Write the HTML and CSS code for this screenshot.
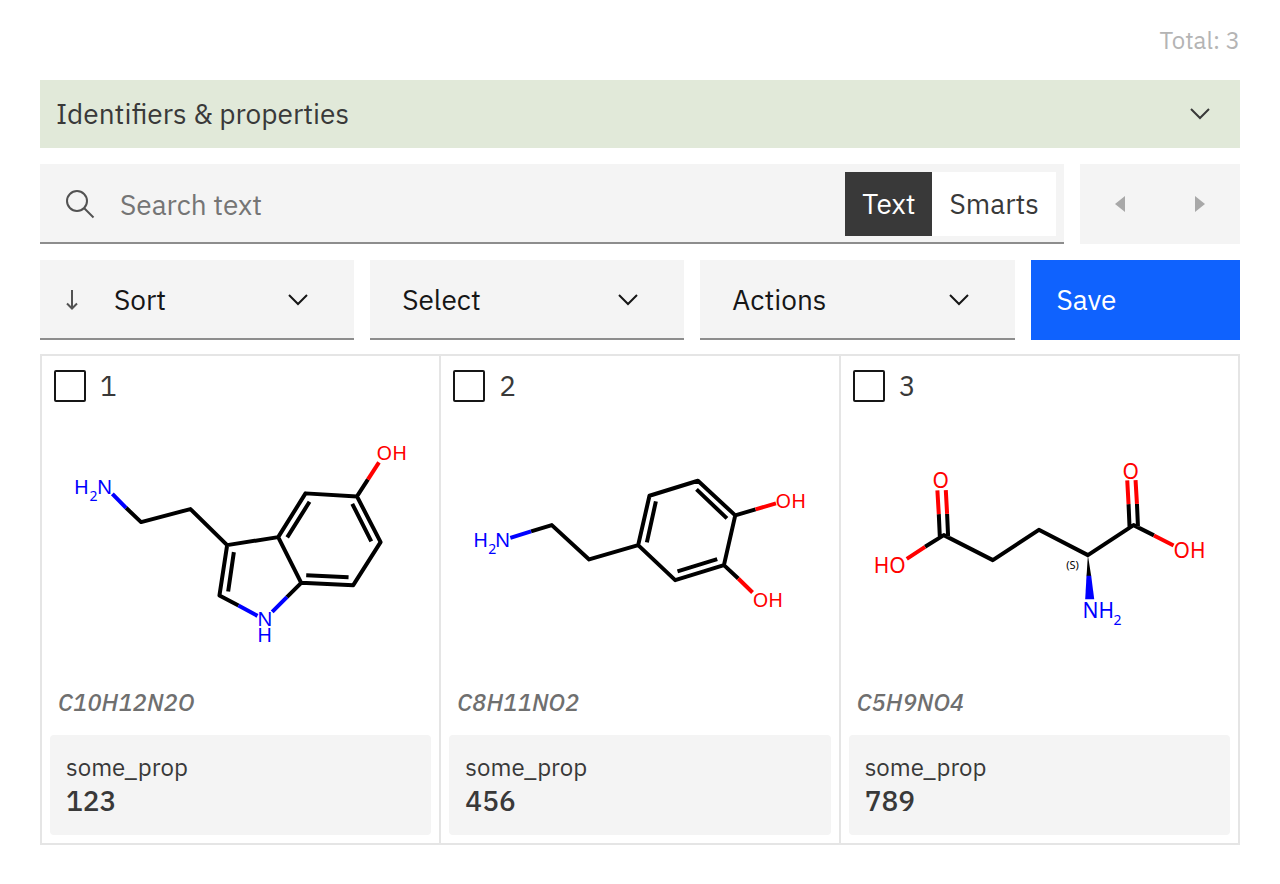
FILE: index.html
```html
<!DOCTYPE html>
<html lang="en">
<head>
<meta charset="utf-8">
<meta name="viewport" content="width=device-width, initial-scale=1">
<title>Molecules</title>
<link rel="stylesheet" href="styles.css">
</head>
<body>
<main class="viewer">
  <p class="total">Total: 3</p>

  <button class="accordion" type="button" aria-expanded="false">
    <span>Identifiers &amp; properties</span>
    <svg class="chevron" viewBox="0 0 20 12" aria-hidden="true"><path d="M1 1l9 9 9-9"/></svg>
  </button>

  <div class="search-row">
    <div class="search">
      <svg class="search-icon" viewBox="0 0 32 32" aria-hidden="true"><circle cx="13" cy="13" r="10"/><path d="M20 20l9.5 9.5"/></svg>
      <input class="search-input" type="text" placeholder="Search text" aria-label="Search text">
      <div class="switch">
        <button class="switch-option switch-option-on" type="button" aria-pressed="true">Text</button>
        <button class="switch-option" type="button" aria-pressed="false">Smarts</button>
      </div>
    </div>
    <div class="pager">
      <button class="page-button" type="button" aria-label="Previous page"><svg class="triangle" viewBox="0 0 10 16" aria-hidden="true"><path d="M10 0v16L0 8z"/></svg></button>
      <button class="page-button" type="button" aria-label="Next page"><svg class="triangle" viewBox="0 0 10 16" aria-hidden="true"><path d="M0 0v16l10-8z"/></svg></button>
    </div>
  </div>

  <div class="action-row">
    <div class="dropdown">
      <button class="direction" type="button" aria-label="Sort direction"><svg class="arrow" viewBox="0 0 14 20" aria-hidden="true"><path d="M7 0v18M2 13.500l5 5 5-5"/></svg></button>
      <select class="select select-sort" aria-label="Sort"><option>Sort</option></select>
      <svg class="chevron dropdown-chevron" viewBox="0 0 20 12" aria-hidden="true"><path d="M1 1l9 9 9-9"/></svg>
    </div>
    <div class="dropdown">
      <select class="select" aria-label="Select"><option>Select</option></select>
      <svg class="chevron dropdown-chevron" viewBox="0 0 20 12" aria-hidden="true"><path d="M1 1l9 9 9-9"/></svg>
    </div>
    <div class="dropdown">
      <select class="select" aria-label="Actions"><option>Actions</option></select>
      <svg class="chevron dropdown-chevron" viewBox="0 0 20 12" aria-hidden="true"><path d="M1 1l9 9 9-9"/></svg>
    </div>
    <button class="save" type="button">Save</button>
  </div>

  <div class="cards">
    <article class="card">
      <label class="card-head"><input class="check" type="checkbox"><span>1</span></label>
      <svg class="molecule" viewBox="42 402 397 284" role="img" aria-label="Serotonin structure">
        <path class="bond" d="M126 507.700L141 522L190.300 509L227 545L278 537L305.300 493.300L356.700 496.300L380.300 542L353 585L301 582.700L278 537M227 545L219.300 595.300L238.300 605.300M301 582.700L286.700 597M356.700 496.300L367.700 479.300M309.300 501.700L287 537.300M352 503.700L371 541.300M306 575L348.300 577M233.700 552L228 591.300"/>
        <path class="bond bond-n" d="M112.300 493.700L126 507.700M238.300 605.300L257.300 615.700M286.700 597L272 611.700"/>
        <path class="bond bond-o" d="M367.700 479.300L378.700 462.300"/>
        <g class="atom atom-n"><text x="74" y="493.500">H</text><text class="sub" x="89.500" y="500.700">2</text><text x="97" y="493.500">N</text><text x="257.200" y="626">N</text><text x="257.200" y="642.300">H</text></g>
        <text class="atom atom-o" x="376.300" y="460.300">OH</text>
      </svg>
      <p class="formula">C10H12N2O</p>
      <dl class="prop"><dt>some_prop</dt><dd>123</dd></dl>
    </article>

    <article class="card">
      <label class="card-head"><input class="check" type="checkbox"><span>2</span></label>
      <svg class="molecule" viewBox="441 402 397 284" role="img" aria-label="Dopamine structure">
        <path class="bond" d="M531 531.300L551.700 525L589 559.300L638 545L649.300 495.700L697.700 480.700L735 515.300L723.700 565L675 580L638 545M735 515.300L755.300 509.300M723.700 565L738 578.300M655.700 501.300L646.700 542.300M696.300 489.300L726.700 518.300M717 559L677.300 571.300"/>
        <path class="bond bond-n" d="M510.300 537.700L531 531.300"/>
        <path class="bond bond-o" d="M755.300 509.300L775.700 503.300M738 578.300L752.300 592.300"/>
        <g class="atom atom-n"><text x="473.200" y="547.300">H</text><text class="sub" x="488.300" y="554.300">2</text><text x="495" y="547.300">N</text></g>
        <g class="atom atom-o"><text x="775.300" y="508">OH</text><text x="752.500" y="607">OH</text></g>
      </svg>
      <p class="formula">C8H11NO2</p>
      <dl class="prop"><dt>some_prop</dt><dd>456</dd></dl>
    </article>

    <article class="card">
      <label class="card-head"><input class="check" type="checkbox"><span>3</span></label>
      <svg class="molecule" viewBox="841 402 397 284" role="img" aria-label="Glutamic acid structure">
        <path class="bond" d="M925 546.700L943.700 535L992.700 560L1038.700 529.700L1087.700 555L1133.300 525L1153.700 535.300M939.700 536L938.700 514M948 536L947 513.700M1129.300 527L1128.300 504M1137.700 526L1136.700 503.700"/>
        <path class="bond bond-o" d="M925 546.700L906.700 558.700M938.700 514L937.300 490.300M947 513.700L945.700 490M1128.300 504L1127 480.300M1136.700 503.700L1135.300 480M1153.700 535.300L1173.300 545.300"/>
        <path class="wedge" d="M1087.700 555L1086.300 576H1091z"/>
        <path class="wedge-n" d="M1086.300 575.700H1091L1094 599H1085z"/>
        <g class="atom atom-o atom-large"><text x="932.300" y="488.300">O</text><text x="1122.300" y="478.500">O</text><text x="873.600" y="572.700">HO</text><text x="1173.300" y="558">OH</text></g>
        <g class="atom atom-n atom-large"><text x="1082.300" y="617.700">NH</text><text class="sub" x="1113.300" y="625">2</text></g>
        <text class="stereo" x="1066" y="569">(S)</text>
      </svg>
      <p class="formula">C5H9NO4</p>
      <dl class="prop"><dt>some_prop</dt><dd>789</dd></dl>
    </article>
  </div>
</main>
</body>
</html>
```
FILE: styles.css
```css
* { box-sizing: border-box; }

body {
  margin: 0;
  background: #fff;
  color: #393939;
  font-family: "IBM Plex Sans", Roboto, "Noto Sans", sans-serif;
  font-size: 28px;
  line-height: 36px;
}

button, input, select {
  margin: 0;
  border: 0;
  border-radius: 0;
  padding: 0;
  background: none;
  color: inherit;
  font: inherit;
}

p, dl, dd { margin: 0; }

.viewer { padding: 24px 40px 40px; }

.total {
  margin-bottom: 24px;
  color: #b4b4b4;
  font-size: 24px;
  line-height: 32px;
  text-align: right;
}

.accordion {
  display: flex;
  align-items: center;
  justify-content: space-between;
  width: 100%;
  padding: 16px 30px 16px 16px;
  background: #e1e9d9;
  text-align: left;
}

.chevron {
  flex: none;
  width: 20px;
  height: 12px;
  fill: none;
  stroke: currentColor;
  stroke-width: 2;
}

.search-row {
  display: flex;
  gap: 16px;
  margin-top: 16px;
}

.search {
  display: flex;
  flex: 1;
  align-items: center;
  min-width: 0;
  height: 80px;
  padding: 0 8px 0 24px;
  background: #f4f4f4;
  box-shadow: inset 0 -2px #8d8d8d;
}

.search-icon {
  flex: none;
  width: 32px;
  height: 32px;
  fill: none;
  stroke: #525252;
  stroke-width: 2;
}

.search-input {
  flex: 1;
  min-width: 0;
  height: 64px;
  padding: 0 24px;
}

.search-input::placeholder { color: #757575; opacity: 1; }

.switch { display: flex; background: #fff; }

.switch-option { height: 64px; padding: 0 17px; }

.switch-option-on { background: #393939; color: #fff; }

.pager { display: flex; background: #f4f4f4; }

.page-button {
  display: grid;
  place-items: center;
  width: 80px;
  height: 80px;
}

.triangle { width: 10px; height: 16px; fill: #a8a8a8; }

.action-row {
  display: grid;
  grid-template-columns: 3fr 3fr 3fr 2fr;
  gap: 16px;
  margin-top: 16px;
}

.dropdown {
  position: relative;
  display: flex;
  height: 80px;
  background: #f4f4f4;
  box-shadow: inset 0 -2px #8d8d8d;
  color: #161616;
}

.direction {
  display: grid;
  place-items: center;
  width: 64px;
}

.arrow {
  width: 14px;
  height: 20px;
  fill: none;
  stroke: #525252;
  stroke-width: 2;
}

.select {
  flex: 1;
  min-width: 0;
  padding: 0 80px 0 32px;
  appearance: none;
}

.select-sort { padding-left: 10px; }

.dropdown-chevron {
  position: absolute;
  top: 34px;
  right: 46px;
  pointer-events: none;
}

.save {
  height: 80px;
  padding: 0 26px;
  background: #0f62fe;
  color: #fff;
  text-align: left;
}

.cards {
  display: grid;
  grid-template-columns: repeat(3, 1fr);
  margin-top: 14px;
  border: 2px solid #e5e5e5;
  border-right: 0;
}

.card {
  display: flex;
  flex-direction: column;
  border-right: 2px solid #e5e5e5;
}

.card-head {
  display: flex;
  align-items: center;
  gap: 14px;
  height: 32px;
  margin: 14px 12px 0;
}

.check {
  width: 32px;
  height: 32px;
  border: 2px solid #161616;
  border-radius: 2px;
  appearance: none;
}

.check:checked { background: #161616; }

.molecule { display: block; width: 100%; height: auto; }

.bond { fill: none; stroke: #000; stroke-width: 4; stroke-linejoin: round; }
.bond-n { stroke: #00f; }
.bond-o { stroke: #f00; }
.wedge { fill: #000; }
.wedge-n { fill: #00f; }

.atom { font-family: "Noto Sans", sans-serif; font-size: 20px; }
.atom-large { font-size: 21px; }
.atom-n { fill: #00f; }
.atom-o { fill: #f00; }
.sub { font-size: 14px; }
.stereo { font-family: "Noto Sans", sans-serif; font-size: 11px; fill: #000; }

.formula {
  margin: 0 16px;
  color: #6f6f6f;
  font-size: 24px;
  font-style: italic;
  font-weight: 500;
  line-height: 32px;
}

.prop {
  margin: 17px 8px 8px;
  padding: 16px;
  border-radius: 4px;
  background: #f4f4f4;
}

.prop dt { font-size: 24px; line-height: 32px; }
.prop dd { font-weight: 500; }
```
